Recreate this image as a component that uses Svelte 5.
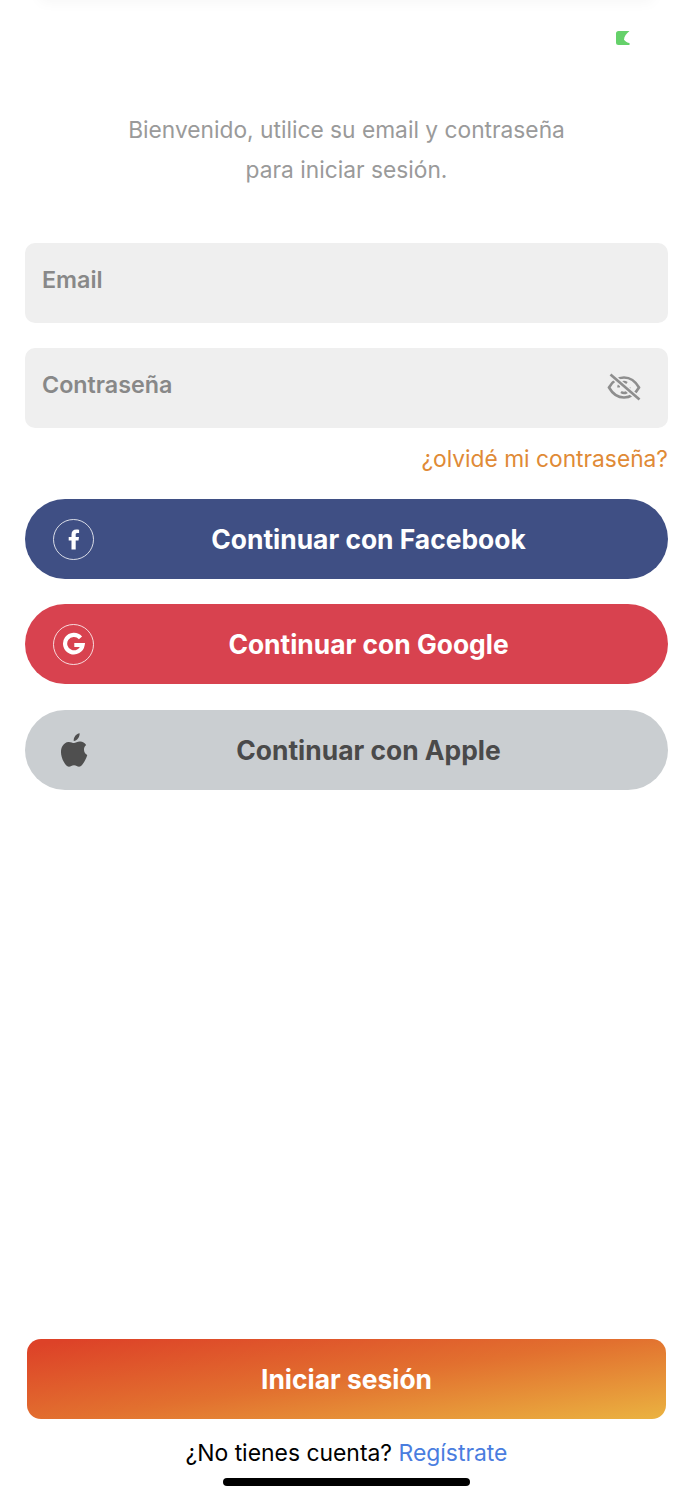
<script lang="ts">
	let email = $state('');
	let password = $state('');
</script>

<div class="screen">
	<div class="top-shadow"></div>

	<div class="status">
		<svg class="battery" viewBox="0 0 14 14" width="14" height="14" aria-hidden="true">
			<path d="M2.500 0H13.500C10.500 2.500 8 5.500 8 8.700 9.500 10.800 11.500 11.800 13.500 12V14H2.500A2.500 2.500 0 0 1 0 11.500V2.500A2.500 2.500 0 0 1 2.500 0Z" fill="#65d16a" />
		</svg>
	</div>

	<p class="intro">Bienvenido, utilice su email y contraseña<br />para iniciar sesión.</p>

	<div class="form">
		<label class="field">
			<input type="text" placeholder="Email" bind:value={email} />
		</label>
		<label class="field">
			<input type="password" placeholder="Contraseña" bind:value={password} />
			<svg class="eye" viewBox="0 0 34 28" width="34" height="28" fill="none" stroke="#8e8e8e" stroke-width="2.600" aria-hidden="true">
				<path d="M2 14.500C6 7.500 11 4.500 17 4.500S28 7.500 32 14.500C28 21.500 23 24.500 17 24.500S6 21.500 2 14.500Z" />
				<path d="M11.500 14.500A5.500 5.500 0 0 1 20 10M22.500 14.500A5.500 5.500 0 0 1 14 19" />
				<path d="M3.500 1.500L32.500 26.500" stroke="#efefef" stroke-width="5.500" />
				<path d="M3.500 1.500L32.500 26.500" />
			</svg>
		</label>
	</div>

	<a class="forgot" href="#forgot">¿olvidé mi contraseña?</a>

	<div class="socials">
		<button class="social facebook">
			<span class="ring">
				<svg viewBox="0 0 24 24" width="24" height="24" aria-hidden="true">
					<path d="M9.500 22.500V13.500H6.700V10H9.500V7.400C9.500 4.100 11.500 2.500 14.300 2.500C15.500 2.500 16.600 2.600 17.100 2.700V6H15.300C13.900 6 13.700 6.800 13.700 7.800V10H17L16.500 13.500H13.700V22.500Z" fill="#fff" />
				</svg>
			</span>
			<span class="label">Continuar con Facebook</span>
		</button>
		<button class="social google">
			<span class="ring">
				<svg viewBox="0 0 24 24" width="24" height="24" fill="none" aria-hidden="true">
					<path d="M18.500 5.800A8.800 8.800 0 1 0 20.600 13H12.300" stroke="#fff" stroke-width="4.200" />
				</svg>
			</span>
			<span class="label">Continuar con Google</span>
		</button>
		<button class="social apple">
			<span class="ring plain">
				<svg viewBox="0 -1.350 24 28" width="30" height="40" preserveAspectRatio="none" aria-hidden="true">
					<path d="M16.500 1C16.700 3.500 14.500 6.400 11.800 6.300 11.500 3.900 13.900 1.200 16.500 1ZM12 7.800C13.200 7.800 14.800 6.600 17 6.700 18.900 6.800 20.600 7.600 21.700 9.200 19.100 10.800 19.500 14.800 22.600 16.200 22 18 21.100 19.800 20 21.300 18.900 22.800 17.800 24.300 16.100 24.300 14.500 24.300 13.900 23.300 12 23.300 10.100 23.300 9.500 24.300 7.900 24.300 6.200 24.300 5 22.700 3.900 21.100 1.500 17.500 .7 12.900 2.800 9.900 3.900 8.300 5.600 7 7.600 7 9.400 6.900 10.900 7.800 12 7.800Z" fill="#4f4f4f" />
				</svg>
			</span>
			<span class="label">Continuar con Apple</span>
		</button>
	</div>

	<div class="bottom">
		<button class="login">Iniciar sesión</button>
		<p class="signup">¿No tienes cuenta? <a href="#register">Regístrate</a></p>
		<div class="home-bar"></div>
	</div>
</div>

<style>
	:global(body) {
		margin: 0;
		background: #fff;
	}

	.screen {
		position: relative;
		width: 693px;
		height: 1500px;
		padding: 0 25px;
		box-sizing: border-box;
		display: flex;
		flex-direction: column;
		overflow: hidden;
		font-family: Inter, 'Liberation Sans', sans-serif;
	}

	.top-shadow {
		position: absolute;
		top: -20px;
		left: 40px;
		right: 40px;
		height: 20px;
		box-shadow: 0 2px 14px rgba(0, 0, 0, 0.04);
	}

	.status {
		height: 45px;
		padding-top: 31px;
		padding-right: 38px;
		box-sizing: border-box;
		display: flex;
		justify-content: flex-end;
	}

	.battery {
		display: block;
	}

	.intro {
		margin: 65px 0 0;
		font-size: 22.750px;
		line-height: 40px;
		color: #9a9a9a;
		text-align: center;
	}

	.form {
		margin-top: 53px;
		display: flex;
		flex-direction: column;
		gap: 25px;
	}

	.field {
		position: relative;
		display: block;
		height: 80px;
		background: #efefef;
		border-radius: 10px;
	}

	input {
		width: 100%;
		height: 73px;
		padding: 0 80px 0 17px;
		box-sizing: border-box;
		border: none;
		outline: none;
		background: none;
		font: 600 23.300px Inter, 'Liberation Sans', sans-serif;
		color: #555;
	}

	input::placeholder {
		color: #888;
		opacity: 1;
	}

	.eye {
		position: absolute;
		right: 27px;
		top: 25px;
	}

	.forgot {
		align-self: flex-end;
		margin-top: 15px;
		font-size: 22.750px;
		line-height: 32px;
		color: #e08a36;
		text-decoration: none;
	}

	.socials {
		margin-top: 24px;
		display: flex;
		flex-direction: column;
		gap: 25.400px;
	}

	.social {
		position: relative;
		height: 80px;
		border: none;
		border-radius: 40px;
		font: 700 26.400px Inter, 'Liberation Sans', sans-serif;
		display: flex;
		align-items: center;
		justify-content: center;
		padding: 0 0 0 44px;
	}

	.facebook {
		background: #3f4f84;
		color: #fff;
	}

	.google {
		background: #d8424f;
		color: #fff;
	}

	.apple {
		background: #caced1;
		color: #4a4a4a;
	}

	.ring {
		position: absolute;
		left: 28px;
		top: 19.500px;
		width: 41px;
		height: 41px;
		box-sizing: border-box;
		border: 1px solid rgba(255, 255, 255, 0.8);
		border-radius: 50%;
		display: flex;
		align-items: center;
		justify-content: center;
	}

	.ring.plain {
		border: none;
	}

	.bottom {
		margin-top: auto;
		display: flex;
		flex-direction: column;
		align-items: center;
		padding-bottom: 14px;
	}

	.login {
		width: 639px;
		height: 80px;
		border: none;
		border-radius: 14px;
		background: linear-gradient(172deg, #dd4228 4%, #e2702f 50%, #eab040 98%);
		color: #fff;
		font: 700 26.400px Inter, 'Liberation Sans', sans-serif;
	}

	.signup {
		margin: 18px 0 0;
		font-size: 22.900px;
		line-height: 32px;
		color: #000;
	}

	.signup a {
		color: #4a7ddf;
		text-decoration: none;
	}

	.home-bar {
		margin-top: 9px;
		width: 247px;
		height: 8px;
		border-radius: 4px;
		background: #000;
	}
</style>
